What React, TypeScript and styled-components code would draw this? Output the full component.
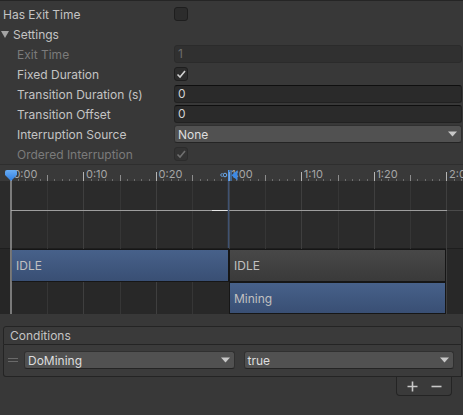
import styled, { createGlobalStyle } from 'styled-components'

const UNIT = 72.6
const X0 = 10.8
const LABELS = ['0:00', '0:10', '0:20', '1:00', '1:10', '1:20', '2:00']

const px = (x: number) => Math.round(x) + 0.5

function Check({ dim }: { dim?: boolean }) {
  return (
    <svg width="12" height="12" viewBox="0 0 12 12">
      <path d="M2.5 6.5 L5 9 L10 3" fill="none" stroke={dim ? '#6f6f6f' : '#d0d0d0'} strokeWidth="1.6" />
    </svg>
  )
}

function Arrow() {
  return (
    <svg width="9" height="6" viewBox="0 0 9 6">
      <path d="M0 0.5 L9 0.5 L4.5 5.5 Z" fill="#c8c8c8" />
    </svg>
  )
}

function GridLayer() {
  const majors = LABELS.map((_, k) => X0 + k * UNIT)
  const minor: number[] = []
  const half: number[] = []
  majors.forEach(m => {
    for (let j = 1; j < 10; j++) {
      if (j === 5) half.push(m + UNIT / 2)
      else minor.push(m + (j * UNIT) / 10)
    }
  })
  return (
    <Layer $z={1} width="463" height="150">
      {/* ruler */}
      {minor.map(x => <line key={'s' + x} x1={px(x)} x2={px(x)} y1="15" y2="17" stroke="#6c6c6c" />)}
      {half.map(x => <line key={'h' + x} x1={px(x)} x2={px(x)} y1="11" y2="17" stroke="#8c8c8c" />)}
      {majors.map((x, i) => (
        <g key={'m' + i}>
          <line x1={px(x)} x2={px(x)} y1="8" y2="17" stroke="#b4b4b4" />
          <text x={x + 2.6} y="14" fontSize="11" fill="#a6a6a6" fontFamily="Inter, sans-serif">{LABELS[i]}</text>
        </g>
      ))}
      {/* grid */}
      {half.map(x => <line key={'gh' + x} x1={px(x)} x2={px(x)} y1="17" y2="150" stroke="#363636" />)}
      {majors.slice(1).map((x, i) => <line key={'gm' + i} x1={px(x)} x2={px(x)} y1="17" y2="150" stroke="#3f3f3f" />)}
      {/* curve */}
      <line x1="11" x2="447" y1="46.5" y2="46.5" stroke="#9e9e9e" />
      <line x1="212" x2="228" y1="46.5" y2="46.5" stroke="#e6e6e6" />
      <line x1="447" x2="463" y1="46.5" y2="46.5" stroke="#4a4a4a" />
      <line x1="228.5" x2="228.5" y1="17" y2="84" stroke="#3f5271" strokeWidth="1.5" />
    </Layer>
  )
}

function MarkerLayer() {
  return (
    <Layer $z={3} width="463" height="150">
      <defs>
        <linearGradient id="ph" x1="0" y1="0" x2="0" y2="1">
          <stop offset="0" stopColor="#6aaef5" />
          <stop offset="1" stopColor="#2f7de0" />
        </linearGradient>
      </defs>
      <line x1="11" x2="11" y1="16" y2="150" stroke="#b2b2b2" strokeWidth="1.2" />
      <path d="M5 8 Q5 6 7 6 L15 6 Q17 6 17 8 L17 11 L11 17 L5 11 Z" fill="url(#ph)" />
      <path d="M222.5 9 L220.5 11 L222.5 13" fill="none" stroke="#6aaaf0" strokeWidth="1" />
      <circle cx="225" cy="11" r="1.8" fill="none" stroke="#6aaaf0" strokeWidth="1" />
      <rect x="228" y="6" width="1.5" height="11" fill="#4b96ee" />
      <rect x="230.5" y="6" width="1" height="11" fill="#4b96ee" />
      <path d="M237.5 6 L237.5 16.5 L231.5 11.2 Z" fill="#3d8ae6" />
    </Layer>
  )
}

function App() {
  return (
    <Page>
      <GlobalStyle />
      <Inspector>
        <Row>
          <Label>Has Exit Time</Label>
          <Checkbox />
        </Row>
        <Row>
          <Foldout>
            <svg width="8" height="7" viewBox="0 0 8 7"><path d="M0 0 L8 0 L4 7 Z" fill="#a4a4a4" /></svg>
            Settings
          </Foldout>
        </Row>
        <Row>
          <Label $indent $disabled>Exit Time</Label>
          <Field $disabled>1</Field>
        </Row>
        <Row>
          <Label $indent>Fixed Duration</Label>
          <Checkbox><Check /></Checkbox>
        </Row>
        <Row>
          <Label $indent>Transition Duration (s)</Label>
          <Field>0</Field>
        </Row>
        <Row>
          <Label $indent>Transition Offset</Label>
          <Field>0</Field>
        </Row>
        <Row>
          <Label $indent>Interruption Source</Label>
          <Dropdown>None<Arrow /></Dropdown>
        </Row>
        <Row>
          <Label $indent $disabled>Ordered Interruption</Label>
          <Checkbox $disabled><Check dim /></Checkbox>
        </Row>
      </Inspector>

      <Timeline>
        <GridLayer />
        <MarkerLayer />
        <Ruler />
        <CurveArea />
        <Tracks>
          <TrackRow $h={33}>
            <Gutter />
            <Bar $w={218} $tone="blue">IDLE</Bar>
            <Bar $w={217} $tone="grey">IDLE</Bar>
          </TrackRow>
          <TrackRow $h={32}>
            <Gutter />
            <Empty $w={218} />
            <Bar $w={217} $tone="blue">Mining</Bar>
          </TrackRow>
        </Tracks>
      </Timeline>

      <Conditions>
        <ListHeader>Conditions</ListHeader>
        <ListBody>
          <Handle>
            <svg width="10" height="5" viewBox="0 0 10 5">
              <line x1="0" x2="10" y1="0.5" y2="0.5" stroke="#6a6a6a" />
              <line x1="0" x2="10" y1="3.5" y2="3.5" stroke="#6a6a6a" />
            </svg>
          </Handle>
          <Dropdown $grow>DoMining<Arrow /></Dropdown>
          <Dropdown $grow>true<Arrow /></Dropdown>
        </ListBody>
        <ListFooter>
          <FooterButton>
            <svg width="11" height="11" viewBox="0 0 11 11">
              <path d="M5.5 0.5 V10.5 M0.5 5.5 H10.5" stroke="#c8c8c8" strokeWidth="1.6" />
            </svg>
          </FooterButton>
          <FooterButton>
            <svg width="11" height="11" viewBox="0 0 11 11">
              <path d="M0.5 5.5 H10.5" stroke="#c8c8c8" strokeWidth="1.6" />
            </svg>
          </FooterButton>
        </ListFooter>
      </Conditions>
    </Page>
  )
}

const GlobalStyle = createGlobalStyle`
html, body {
  margin: 0;
  padding: 0;
  background: #383838;
}
body {
  font-family: Inter, "Noto Sans", sans-serif;
  font-size: 12px;
  color: #c4c4c4;
}
`
const Page = styled.div`
width: 463px;
height: 415px;
overflow: hidden;
box-sizing: border-box;
border-top: 1px solid #252525;
`
const Inspector = styled.div`
padding-top: 3px;
`
const Row = styled.div`
display: grid;
grid-template-columns: 174px 1fr;
align-items: center;
height: 20px;
padding-right: 1px;
`
const Label = styled.div<{ $indent?: boolean; $disabled?: boolean }>`
padding-left: ${p => (p.$indent ? 17 : 3)}px;
color: ${p => (p.$disabled ? '#7b7b7b' : '#c4c4c4')};
white-space: nowrap;
`
const Foldout = styled.div`
display: flex;
align-items: center;
gap: 4px;
padding-left: 1px;
`
const Checkbox = styled.div<{ $disabled?: boolean }>`
width: 14px;
height: 14px;
box-sizing: border-box;
border-radius: 3px;
background: ${p => (p.$disabled ? '#333333' : '#2c2c2c')};
border: 1px solid ${p => (p.$disabled ? '#2c2c2c' : '#1e1e1e')};
display: flex;
align-items: center;
justify-content: center;
`
const Field = styled.div<{ $disabled?: boolean }>`
height: 18px;
box-sizing: border-box;
border-radius: 3px;
padding: 0 3px;
line-height: 16px;
background: ${p => (p.$disabled ? '#303030' : '#2a2a2a')};
border: 1px solid ${p => (p.$disabled ? '#2b2b2b' : '#212121')};
border-top-color: ${p => (p.$disabled ? '#2b2b2b' : '#0f0f0f')};
color: ${p => (p.$disabled ? '#6c6c6c' : '#d2d2d2')};
`
const Dropdown = styled.div<{ $grow?: boolean }>`
flex: ${p => (p.$grow ? 1 : 'none')};
height: 18px;
box-sizing: border-box;
display: flex;
align-items: center;
justify-content: space-between;
padding: 0 4px 0 3px;
border-radius: 3px;
background: #515151;
border: 1px solid #303030;
border-bottom-color: #242424;
color: #dedede;
`
const Timeline = styled.div`
position: relative;
height: 150px;
background: #2b2b2b;
overflow: hidden;
`
const Layer = styled.svg<{ $z: number }>`
position: absolute;
left: 0;
top: 0;
z-index: ${p => p.$z};
pointer-events: none;
`
const Ruler = styled.div`
height: 17px;
box-sizing: border-box;
background: #393939;
border-top: 1px solid #2e2e2e;
`
const CurveArea = styled.div`
height: 67px;
`
const Tracks = styled.div`
border-top: 1px solid #1e1e1e;
background: #282828;
`
const TrackRow = styled.div<{ $h: number }>`
display: flex;
height: ${p => p.$h}px;
`
const Gutter = styled.div`
width: 11px;
background: #262626;
`
const Empty = styled.div<{ $w: number }>`
width: ${p => p.$w}px;
`
const Bar = styled.div<{ $w: number; $tone: 'blue' | 'grey' }>`
position: relative;
z-index: 2;
width: ${p => p.$w}px;
box-sizing: border-box;
display: flex;
align-items: center;
padding-left: 4px;
border: 1px solid #161616;
color: #c0c0c0;
background: ${p =>
  p.$tone === 'blue'
    ? 'linear-gradient(#47618a, #394f74)'
    : 'linear-gradient(#484848, #3a3a3a)'};
`
const Conditions = styled.div`
margin: 12px 1px 0 3px;
display: flex;
flex-direction: column;
`
const ListHeader = styled.div`
height: 19px;
box-sizing: border-box;
border: 1px solid #242424;
border-radius: 3px 3px 0 0;
background: #3a3a3a;
padding-left: 6px;
line-height: 17px;
`
const ListBody = styled.div`
height: 32px;
box-sizing: border-box;
display: flex;
align-items: flex-start;
gap: 9px;
padding: 6px 7px 0 4px;
border: 1px solid #242424;
border-top: none;
border-radius: 0 0 0 3px;
background: #3b3b3b;
`
const Handle = styled.div`
width: 10px;
height: 18px;
margin-right: -3px;
display: flex;
align-items: center;
padding-top: 1px;
box-sizing: border-box;
`
const ListFooter = styled.div`
align-self: flex-end;
margin-right: 10px;
width: 56px;
height: 19px;
box-sizing: border-box;
display: flex;
padding-left: 3px;
border: 1px solid #242424;
border-top: none;
border-radius: 0 0 4px 4px;
background: #3a3a3a;
`
const FooterButton = styled.div`
width: 24px;
display: flex;
align-items: center;
justify-content: center;
`

export default App
